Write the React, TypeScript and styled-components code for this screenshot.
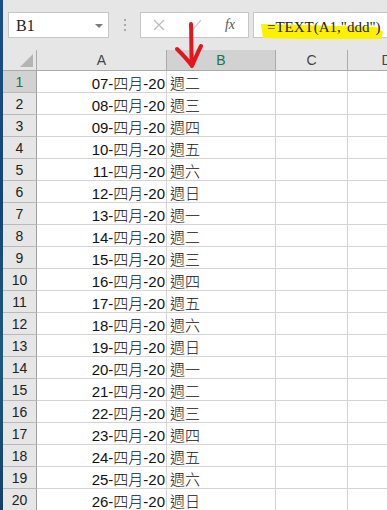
import React from "react";
import styled, { createGlobalStyle } from "styled-components";

const Global = createGlobalStyle`
  html, body { margin: 0; padding: 0; }
  body { width: 387px; height: 510px; overflow: hidden; background: #fff; }
  * { box-sizing: border-box; }
`;

const Page = styled.div`
  position: relative;
  display: flex;
  width: 387px;
  height: 510px;
  overflow: hidden;
`;

const Strip = styled.div`
  width: 3px;
  flex: 0 0 3px;
  background: linear-gradient(#1b4f86, #174476 40%, #1d5a7e 70%, #163e6a);
`;

const Main = styled.div`
  flex: 1;
  display: flex;
  flex-direction: column;
  min-width: 0;
`;

const TopBar = styled.div`
  height: 50px;
  flex: 0 0 50px;
  background: #e6e6e6;
  display: flex;
  align-items: flex-start;
  padding: 12px 0 0 5px;
`;

const NameBox = styled.div`
  width: 101px;
  height: 26px;
  background: #fff;
  border: 1px solid #c6c6c6;
  display: flex;
  align-items: center;
  justify-content: space-between;
  padding: 1px 5px 0 7px;
  font-family: "Liberation Serif", "Noto Sans CJK TC", serif;
  font-size: 16px;
  color: #222;
`;

const Caret = styled.span`
  width: 0;
  height: 0;
  border-left: 4px solid transparent;
  border-right: 4px solid transparent;
  border-top: 4px solid #7a7a7a;
`;

const Dots = styled.div`
  width: 31px;
  height: 26px;
  display: flex;
  flex-direction: column;
  align-items: center;
  justify-content: center;
  gap: 3px;
  span {
    width: 2px;
    height: 2px;
    background: #a8a8a8;
  }
`;

const IconBox = styled.div`
  width: 109px;
  height: 26px;
  background: #fff;
  border: 1px solid #c6c6c6;
  display: flex;
  align-items: center;
  justify-content: space-between;
  padding: 0 13px 0 12px;
`;

const Fx = styled.span`
  font-family: "Liberation Serif", serif;
  font-style: italic;
  font-size: 14px;
  color: #555;
`;

const FormulaBox = styled.div`
  position: relative;
  margin-left: 4px;
  flex: 1;
  height: 26px;
  background: #fff;
  border: 1px solid #c6c6c6;
  border-right: none;
  display: flex;
  align-items: center;
  padding: 4px 0 0 13px;
`;

const Highlight = styled.svg`
  position: absolute;
  left: 0;
  top: 0;
  width: 134px;
  height: 26px;
`;

const FormulaText = styled.span`
  position: relative;
  font-family: "Liberation Serif", "Noto Sans CJK TC", serif;
  font-size: 15px;
  color: #222;
  white-space: nowrap;
`;

const Sheet = styled.div`
  display: grid;
  grid-template-columns: 34px 130px 109px 72px 78px;
  grid-template-rows: 21px;
  grid-auto-rows: 22px;
`;

const Corner = styled.div`
  background: #e6e6e6;
  border-right: 1px solid #ababab;
  border-bottom: 1px solid #ababab;
  display: flex;
  align-items: flex-end;
  justify-content: flex-end;
  padding: 0 3px 3px 0;
`;

const Triangle = styled.div`
  width: 13px;
  height: 13px;
  background: #b4b4b4;
  clip-path: polygon(100% 0, 100% 100%, 0 100%);
`;

const ColHead = styled.div<{ $sel?: boolean }>`
  background: ${(p) => (p.$sel ? "#d2d2d2" : "#e6e6e6")};
  color: ${(p) => (p.$sel ? "#217346" : "#444")};
  border-right: 1px solid #ababab;
  border-bottom: 1px solid #ababab;
  display: flex;
  align-items: center;
  justify-content: center;
  font-family: "Liberation Sans", sans-serif;
  font-size: 14px;
`;

const RowHead = styled.div<{ $sel?: boolean }>`
  background: ${(p) => (p.$sel ? "#d2d2d2" : "#e6e6e6")};
  color: ${(p) => (p.$sel ? "#217346" : "#222")};
  border-right: 1px solid #9f9f9f;
  border-bottom: 1px solid #b9b9b9;
  display: flex;
  align-items: center;
  justify-content: center;
  padding-top: 1px;
  font-family: "Liberation Sans", sans-serif;
  font-size: 14px;
`;

const Cell = styled.div<{ $align?: "left" | "right" }>`
  border-right: 1px solid #d4d4d4;
  border-bottom: 1px solid #d4d4d4;
  display: flex;
  align-items: center;
  justify-content: ${(p) => (p.$align === "right" ? "flex-end" : "flex-start")};
  padding: 1px ${(p) => (p.$align === "right" ? "1px" : "0")} 0
    ${(p) => (p.$align === "left" ? "3px" : "0")};
  font-family: "Liberation Sans", "Noto Sans CJK TC", sans-serif;
  font-weight: 300;
  font-size: 15px;
  color: #111;
  white-space: nowrap;
  overflow: hidden;
`;

const Arrow = styled.svg`
  position: absolute;
  left: 170px;
  top: 18px;
  width: 40px;
  height: 55px;
  pointer-events: none;
`;

const days = ["二", "三", "四", "五", "六", "日", "一"];

const rows = Array.from({ length: 20 }, (_, i) => ({
  n: i + 1,
  date: `${String(7 + i).padStart(2, "0")}-四月-20`,
  day: `週${days[i % 7]}`,
}));

export default function App() {
  return (
    <>
      <Global />
      <Page>
        <Strip />
        <Main>
          <TopBar>
            <NameBox>
              <span>B1</span>
              <Caret />
            </NameBox>
            <Dots>
              <span />
              <span />
              <span />
            </Dots>
            <IconBox>
              <svg width="12" height="12" viewBox="0 0 12 12">
                <path d="M1 1 L11 11 M11 1 L1 11" stroke="#bdbdbd" strokeWidth="1.3" fill="none" />
              </svg>
              <svg width="14" height="12" viewBox="0 0 14 12">
                <path d="M1 6 L5 10.5 L13 1" stroke="#cfcfcf" strokeWidth="1.3" fill="none" />
              </svg>
              <Fx>fx</Fx>
            </IconBox>
            <FormulaBox>
              <Highlight viewBox="0 0 134 26">
                <polygon points="7,11 122,14 129,19 127,28 9,25" fill="#fff000" />
              </Highlight>
              <FormulaText>=TEXT(A1,"ddd")</FormulaText>
            </FormulaBox>
          </TopBar>
          <Sheet>
            <Corner>
              <Triangle />
            </Corner>
            <ColHead>A</ColHead>
            <ColHead $sel>B</ColHead>
            <ColHead>C</ColHead>
            <ColHead>D</ColHead>
            {rows.map((r) => (
              <React.Fragment key={r.n}>
                <RowHead $sel={r.n === 1}>{r.n}</RowHead>
                <Cell $align="right">{r.date}</Cell>
                <Cell $align="left">{r.day}</Cell>
                <Cell />
                <Cell />
              </React.Fragment>
            ))}
          </Sheet>
        </Main>
        <Arrow viewBox="0 0 40 55">
          <path
            d="M21 6 C21.5 18 21 34 22 48 M7 31 C12 36 18 42 22 48 C25 41 28 34 31 28"
            stroke="#e3161c"
            strokeWidth="4"
            strokeLinecap="round"
            strokeLinejoin="round"
            fill="none"
          />
        </Arrow>
      </Page>
    </>
  );
}
